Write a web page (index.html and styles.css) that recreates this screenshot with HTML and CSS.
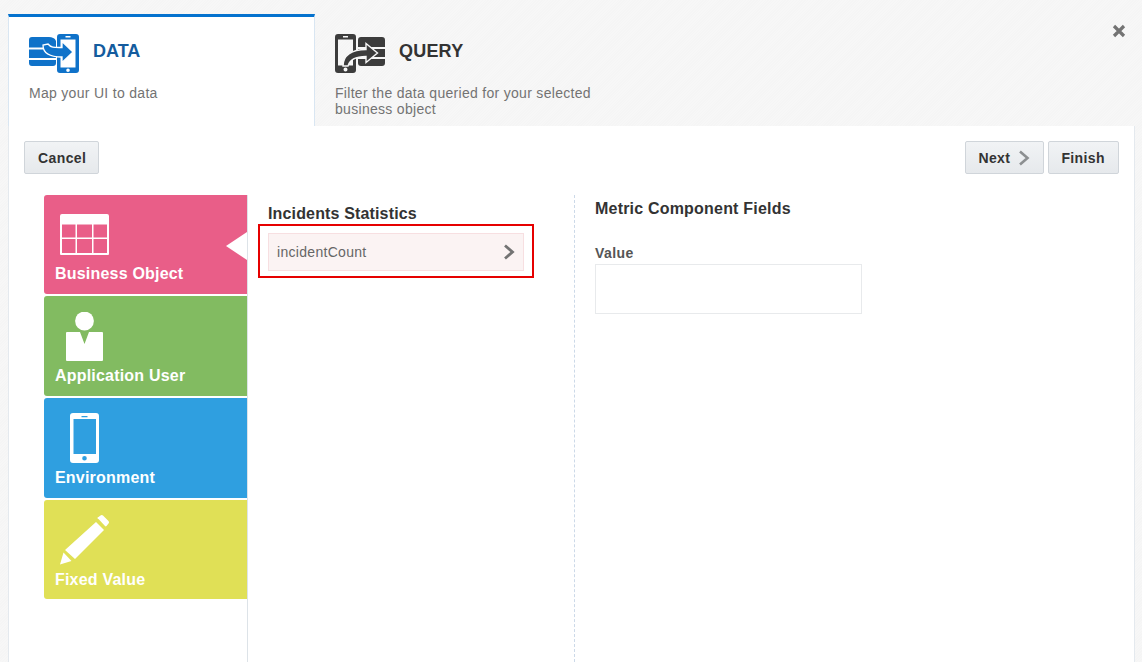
FILE: index.html
```html
<!DOCTYPE html>
<html lang="en">
<head>
<meta charset="utf-8">
<title>Data mapping</title>
<link rel="stylesheet" href="styles.css">
</head>
<body>
<div class="dialog">
  <div class="tabs">
    <div class="tab tab-active">
      <div class="tab-head">
        <svg class="tab-icon" viewBox="0 0 50 40" width="50" height="40">
          <path fill="#0f72c9" d="M3 3h17c3 0 6 1 7 4v6.500H0V6a3 3 0 0 1 3-3zM0 15.500h27V24H0zM0 26h27v3a3 3 0 0 1-3 3H3a3 3 0 0 1-3-3z"/>
          <path fill="#0f72c9" fill-rule="evenodd" d="M31 0h16a3 3 0 0 1 3 3v33a3 3 0 0 1-3 3H31a3 3 0 0 1-3-3V3a3 3 0 0 1 3-3zM31.500 5.500v28h15v-28zM36.500 2v1.500h5V2zM39 34.500a1.800 1.800 0 1 0 0 3.600 1.800 1.800 0 0 0 0-3.600z"/>
          <path fill="#0f72c9" stroke="#fff" stroke-width="1.300" d="M14 11C14 19 20 23 33 23V28.500L44 18 33 7.500V13.500C26 13.500 22 14 19 10z"/>
        </svg>
        <span class="tab-title tab-title-active">DATA</span>
      </div>
      <p class="tab-desc">Map your UI to data</p>
    </div>
    <div class="tab">
      <div class="tab-head">
        <svg class="tab-icon" viewBox="0 0 50 40" width="50" height="40">
          <path fill="#3c3c3c" d="M26 3h21a3 3 0 0 1 3 3v7H23V6a3 3 0 0 1 3-3zM23 15h27v8H23zM23 25h27v4a3 3 0 0 1-3 3H26a3 3 0 0 1-3-3z"/>
          <path fill="#3c3c3c" fill-rule="evenodd" d="M3 0h15a3 3 0 0 1 3 3v33a3 3 0 0 1-3 3H3a3 3 0 0 1-3-3V3a3 3 0 0 1 3-3zM3 5.500v26h15v-26zM8 2v1.500h5V2zM10.500 33.500a2 2 0 1 0 0 4 2 2 0 0 0 0-4z"/>
          <path fill="#3c3c3c" stroke="#f6f6f6" stroke-width="1.400" d="M8 32C8 21 17 15.500 31 15.500V9.500L42.500 19 31 28.500V22.500C23 22.500 15 24 13 32z"/>
        </svg>
        <span class="tab-title tab-title-query">QUERY</span>
      </div>
      <p class="tab-desc">Filter the data queried for your selected<br>business object</p>
    </div>
    <button class="close" type="button" aria-label="Close">
      <svg viewBox="0 0 14 14" width="14" height="14"><path d="M2 2l10 10M12 2L2 12" stroke="#737373" stroke-width="3.200" fill="none"/></svg>
    </button>
  </div>
  <div class="panel">
    <div class="toolbar">
      <button class="btn" type="button">Cancel</button>
      <div class="toolbar-right">
        <button class="btn btn-next" type="button">Next
          <svg class="btn-chev" viewBox="0 0 12 16" width="12" height="16"><path d="M2 1.500l7.500 6.500L2 14.500" stroke="#8c8f91" stroke-width="2.600" fill="none"/></svg>
        </button>
        <button class="btn btn-finish" type="button">Finish</button>
      </div>
    </div>
    <div class="columns">
      <div class="tiles">
        <div class="tile tile-pink">
          <svg class="tile-icon" viewBox="0 0 50 42" width="50" height="42">
            <path fill="#fff" fill-rule="evenodd" d="M2 0h45a2 2 0 0 1 2 2v38a1 1 0 0 1-1 1H1a1 1 0 0 1-1-1V2a2 2 0 0 1 2-2zM2 10.500v13h13.500v-13zM17 10.500v13h15v-13zM33.500 10.500v13h13.500v-13zM2 25v14h13.500V25zM17 25v14h15V25zM33.500 25v14h13.500V25z"/>
          </svg>
          <span class="tile-label">Business Object</span>
          <span class="tile-notch"></span>
        </div>
        <div class="tile tile-green">
          <svg class="tile-icon" viewBox="0 0 50 50" width="50" height="50">
            <circle cx="24.500" cy="9" r="9.400" fill="#fff"/>
            <path fill="#fff" d="M7 20h13l4.500 12L29 20h13a1 1 0 0 1 1 1v27a1 1 0 0 1-1 1H7a1 1 0 0 1-1-1V21a1 1 0 0 1 1-1z"/>
          </svg>
          <span class="tile-label">Application User</span>
        </div>
        <div class="tile tile-blue">
          <svg class="tile-icon" viewBox="0 0 50 50" width="50" height="50">
            <path fill="#fff" fill-rule="evenodd" d="M13 0h23a3 3 0 0 1 3 3v44a3 3 0 0 1-3 3H13a3 3 0 0 1-3-3V3a3 3 0 0 1 3-3zM13.500 6v35h22.500V6zM21.500 3v1.300h6V3zM24.500 43a2.300 2.300 0 1 0 0 4.600 2.300 2.300 0 0 0 0-4.600z"/>
          </svg>
          <span class="tile-label">Environment</span>
        </div>
        <div class="tile tile-yellow">
          <svg class="tile-icon" viewBox="0 0 50 50" width="50" height="50">
            <path fill="#fff" d="M38.500 2l2-1.500a2 2 0 0 1 2.500 0l5.500 5.500a2 2 0 0 1 0 2.500l-2 2.500a1 1 0 0 1-1.500 0l-6.500-7a1 1 0 0 1 0-2zM36 7l8 8L15 44l-10-9zM3.500 37.500l8 8.500L0 49.500z"/>
          </svg>
          <span class="tile-label">Fixed Value</span>
        </div>
      </div>
      <div class="col-list">
        <h2 class="list-title">Incidents Statistics</h2>
        <div class="highlight">
          <div class="list-row">
            <span class="row-text">incidentCount</span>
            <svg viewBox="0 0 12 16" width="12" height="16"><path d="M2 1.500l7.500 6.500L2 14.500" stroke="#737373" stroke-width="2.800" fill="none"/></svg>
          </div>
        </div>
      </div>
      <div class="col-fields">
        <h2 class="fields-title">Metric Component Fields</h2>
        <label class="field-label">Value</label>
        <div class="field-box"></div>
      </div>
    </div>
  </div>
</div>
</body>
</html>
```
FILE: styles.css
```css
* { box-sizing: border-box; }
html, body { height: 100%; }
body {
  margin: 0;
  padding: 14px 7px 0 8px;
  overflow: hidden;
  font-family: "Liberation Sans", Arial, sans-serif;
  background: repeating-linear-gradient(135deg, #f7f7f7 0 1px, #f5f5f5 1px 2px);
}
.dialog { display: flex; flex-direction: column; height: 648px; }
.tabs { display: flex; height: 112px; position: relative; }
.tab { width: 306px; padding: 20px 20px 0 20px; }
.tab-active {
  width: 307px;
  background: #fff;
  border-top: 3px solid #0572ce;
  border-left: 1px solid #d9e6f2;
  border-right: 1px solid #d9e6f2;
  padding-top: 17px;
}
.tab-head { display: flex; align-items: center; gap: 14px; height: 40px; }
.tab-icon { flex: none; }
.tab-title { font-size: 18px; font-weight: 700; color: #333; margin-bottom: 5px; }
.tab-title-query { letter-spacing: .2px; }
.tab-title-active { color: #145c9e; }
.tab-desc { margin: 11px 0 0; font-size: 14px; line-height: 16px; color: #737373; letter-spacing: .3px; }
.close {
  position: absolute; right: 9px; top: 10px;
  width: 14px; height: 14px; padding: 0; border: 0; background: none; display: block;
}
.close svg { display: block; }
.panel {
  flex: 1; background: #fff;
  border-left: 1px solid #e4e9ee;
  border-right: 1px solid #e4e9ee;
  display: flex; flex-direction: column;
  padding: 15px 15px 0 15px;
}
.toolbar { display: flex; justify-content: space-between; height: 33px; }
.toolbar-right { display: flex; gap: 4px; }
.btn {
  height: 33px; padding: 0 12px 0 13px;
  display: flex; align-items: center; gap: 7px;
  font: 700 14px "Liberation Sans", Arial, sans-serif;
  letter-spacing: .4px;
  color: #333;
  background: linear-gradient(#f1f3f5, #e6e9ec);
  border: 1px solid #d0d5da;
  border-radius: 2px;
}
.btn-next { padding: 0 13px 0 12px; gap: 8px; }
.btn-finish { padding: 0 13px 0 12px; }
.btn-chev { flex: none; }
.columns { display: flex; flex: 1; margin-top: 21px; }
.tiles {
  width: 224px; padding-left: 20px; flex: none;
  border-right: 1px solid #dde3e8;
  display: flex; flex-direction: column; gap: 2px;
}
.tile {
  position: relative; height: 99px; width: 203px;
  border-radius: 3px 0 0 3px;
  padding: 19px 0 0 16px;
  color: #fff;
}
.tile-icon { display: block; }
.tile-pink { background: #e95e88; }
.tile-green { background: #82bb61; height: 100px; padding-top: 16px; }
.tile-blue { background: #2f9fe0; height: 100px; padding-top: 15px; }
.tile-yellow { background: #e0e056; padding-top: 15px; }
.tile-label {
  position: absolute; left: 11px; bottom: 10px;
  font-size: 16px; font-weight: 700; line-height: 20px; letter-spacing: .2px;
}
.tile-yellow .tile-label { bottom: 9px; }
.tile-notch {
  position: absolute; right: 0; top: 37px;
  border: 14px solid transparent;
  border-right: 21px solid #fff; border-left: 0;
}
.col-list { width: 327px; flex: none; padding-left: 10px; border-right: 1px dashed #ccd9e8; }
.list-title { margin: 10px 0 0 10px; font-size: 16px; line-height: 18px; font-weight: 700; color: #333; letter-spacing: .15px; }
.highlight { margin-top: 1px; width: 276px; height: 54px; border: 2px solid #e60000; padding: 7px 8px; }
.list-row {
  height: 38px; display: flex; align-items: center; justify-content: space-between;
  padding: 0 8px 0 8px;
  background: #fbf3f3; border: 1px solid #f7dfe1;
}
.row-text { font-size: 14px; color: #666; letter-spacing: .3px; }
.col-fields { padding-left: 20px; }
.fields-title { margin: 5px 0 0; font-size: 16px; line-height: 18px; font-weight: 700; color: #333; letter-spacing: .2px; }
.field-label { display: block; margin-top: 27px; font-size: 14px; line-height: 16px; font-weight: 700; color: #555; letter-spacing: .4px; }
.field-box { margin-top: 3px; width: 267px; height: 50px; border: 1px solid #e8eaec; background: #fff; }
```
